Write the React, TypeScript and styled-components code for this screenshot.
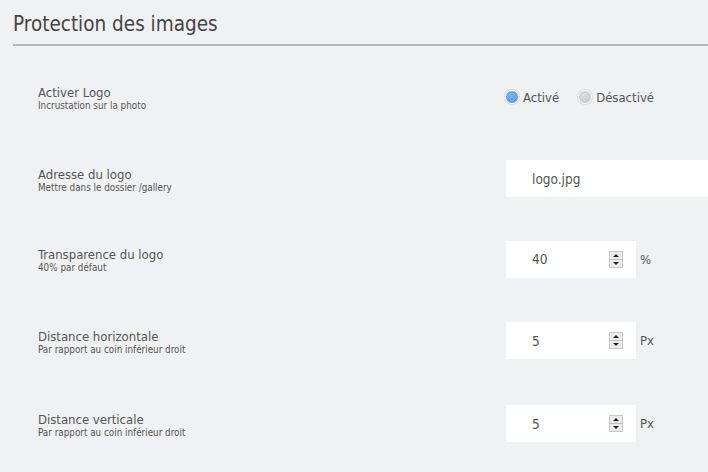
import React from "react";
import styled, { createGlobalStyle } from "styled-components";

const Global = createGlobalStyle`
  html, body { margin: 0; padding: 0; background: #f0f1f3; }
  body { font-family: "DejaVu Sans Condensed", "DejaVu Sans", sans-serif; color: #555; overflow: hidden; }
`;

const Page = styled.div`
  width: 708px;
  height: 472px;
  background: #f0f1f3;
  padding-left: 13px;
  box-sizing: border-box;
  overflow: hidden;
`;

const Title = styled.h1`
  margin: 0;
  padding-top: 12px;
  height: 32px;
  font-size: 20.5px;
  font-weight: normal;
  color: #454545;
  line-height: 24px;
  letter-spacing: 0px;
`;

const Divider = styled.div`
  height: 2px;
  background: #b8b8b8;
  margin-right: -20px;
`;

const Rows = styled.div`
  padding-top: 10px;
  padding-left: 25px;
`;

const Row = styled.div<{ $h: number }>`
  display: flex;
  align-items: center;
  height: ${(p) => p.$h}px;
`;

const LabelBlock = styled.div`
  width: 468px;
  flex-shrink: 0;
  display: flex;
  flex-direction: column;
  padding-top: 3px;
`;

const Label = styled.div`
  font-size: 13px;
  line-height: 15px;
  color: #555;
`;

const Hint = styled.div`
  font-size: 9.8px;
  line-height: 12px;
  color: #555;
`;

const Control = styled.div`
  display: flex;
  align-items: center;
  flex-shrink: 0;
`;

const RadioGroup = styled.div`
  display: flex;
  align-items: center;
  gap: 19px;
  margin-left: -1px;
`;

const RadioItem = styled.label`
  display: flex;
  align-items: center;
  gap: 4px;
  font-size: 13px;
  color: #555;
`;

const Dot = styled.span<{ $on: boolean }>`
  width: 12px;
  height: 12px;
  border-radius: 50%;
  border: 1.5px solid #fff;
  box-shadow: 0 0 1.5px rgba(0, 0, 0, 0.4);
  background: ${(p) => (p.$on ? "radial-gradient(circle at 40% 35%, #7cb6f5, #4f95e6)" : "radial-gradient(circle at 40% 35%, #dcdcdc, #c4c4c4)")};
`;

const Field = styled.div<{ $w: number }>`
  width: ${(p) => p.$w}px;
  height: 37px;
  background: #fff;
  display: flex;
  align-items: center;
  box-sizing: border-box;
  padding-left: 26px;
  padding-right: 13px;
  font-size: 13.5px;
  color: #555;
`;

const Value = styled.span`
  flex: 1;
`;

const Spinner = styled.div`
  width: 14px;
  height: 17px;
  border: 1px solid #c8c8c8;
  background: #ececec;
  display: flex;
  flex-direction: column;
  box-sizing: border-box;
`;

const SpinHalf = styled.div<{ $down?: boolean }>`
  flex: 1;
  display: flex;
  align-items: center;
  justify-content: center;
  ${(p) => (p.$down ? "border-top: 1px solid #bdbdbd;" : "")}
  &::after {
    content: "";
    width: 0;
    height: 0;
    border-left: 3px solid transparent;
    border-right: 3px solid transparent;
    ${(p) => (p.$down ? "border-top: 3px solid #222;" : "border-bottom: 3px solid #222;")}
  }
`;

const Unit = styled.span`
  margin-left: 4px;
  font-size: 13px;
  color: #555;
`;

type NumProps = { value: string; unit: string };
const NumberField = ({ value, unit }: NumProps) => (
  <Control>
    <Field $w={130}>
      <Value>{value}</Value>
      <Spinner>
        <SpinHalf />
        <SpinHalf $down />
      </Spinner>
    </Field>
    <Unit>{unit}</Unit>
  </Control>
);

export default function App() {
  return (
    <Page>
      <Global />
      <Title>Protection des images</Title>
      <Divider />
      <Rows>
        <Row $h={82}>
          <LabelBlock>
            <Label>Activer Logo</Label>
            <Hint>Incrustation sur la photo</Hint>
          </LabelBlock>
          <RadioGroup>
            <RadioItem>
              <Dot $on />
              Activé
            </RadioItem>
            <RadioItem>
              <Dot $on={false} />
              Désactivé
            </RadioItem>
          </RadioGroup>
        </Row>
        <Row $h={81}>
          <LabelBlock>
            <Label>Adresse du logo</Label>
            <Hint>Mettre dans le dossier /gallery</Hint>
          </LabelBlock>
          <Control>
            <Field $w={220}>
              <Value>logo.jpg</Value>
            </Field>
          </Control>
        </Row>
        <Row $h={80}>
          <LabelBlock>
            <Label>Transparence du logo</Label>
            <Hint>40% par défaut</Hint>
          </LabelBlock>
          <NumberField value="40" unit="%" />
        </Row>
        <Row $h={83}>
          <LabelBlock>
            <Label>Distance horizontale</Label>
            <Hint>Par rapport au coin inférieur droit</Hint>
          </LabelBlock>
          <NumberField value="5" unit="Px" />
        </Row>
        <Row $h={83}>
          <LabelBlock>
            <Label>Distance verticale</Label>
            <Hint>Par rapport au coin inférieur droit</Hint>
          </LabelBlock>
          <NumberField value="5" unit="Px" />
        </Row>
      </Rows>
    </Page>
  );
}
